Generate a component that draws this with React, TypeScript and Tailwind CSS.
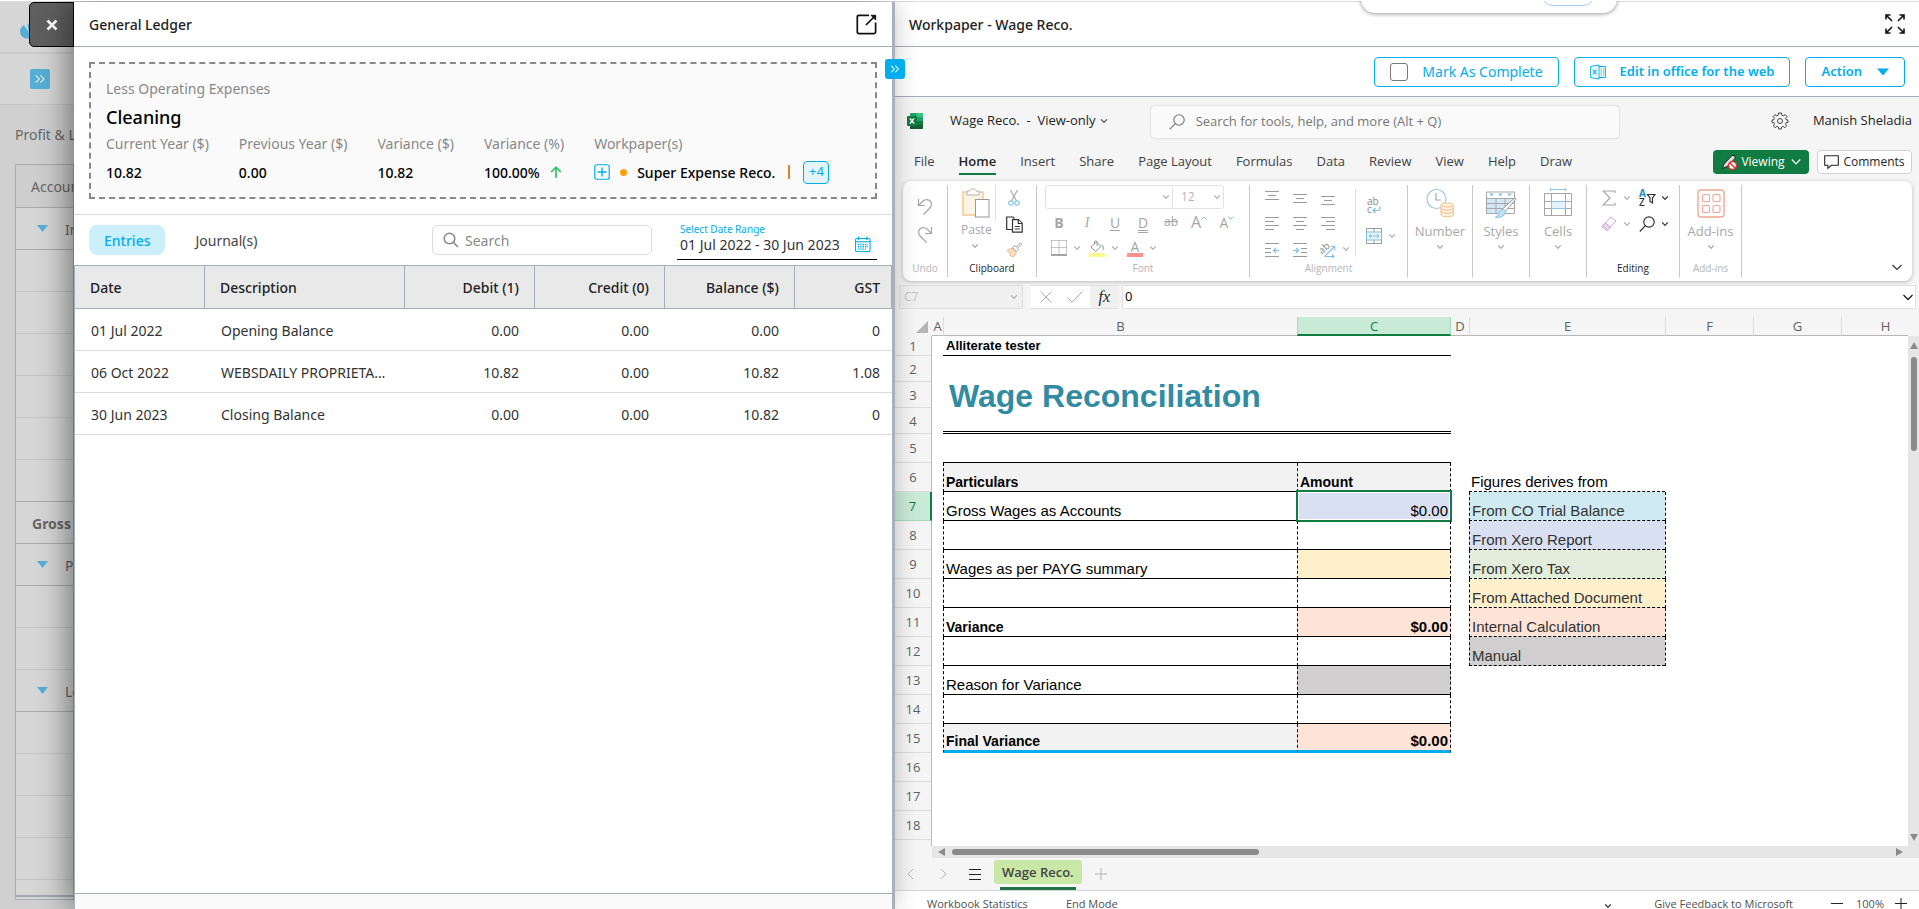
import type { ReactNode } from 'react';
import { ChevronsRight } from 'lucide-react';

type IconProps = { className?: string };

function Chevron({ className = 'text-[#b0b0b0]' }: IconProps) {
  return (
    <svg viewBox="0 0 8 8" className={`size-2 shrink-0 ${className}`} fill="none" stroke="currentColor" strokeWidth="1.3">
      <path d="M1.2 2.4 4 5.4 6.8 2.4" />
    </svg>
  );
}

/* ---------- Page behind the drawer ---------- */

const backdropRows = [
  { label: 'Income', caret: true, dark: true },
  {}, {}, {}, {}, {},
  { dark: true },
  { label: 'Gross Profit', bold: true, dark: true },
  { label: 'Plus Other Income', caret: true, dark: true },
  {}, {},
  { label: 'Less Operating Expenses', caret: true, dark: true },
  {}, {}, {}, {},
] as { label?: string; caret?: boolean; bold?: boolean; dark?: boolean }[];

function Backdrop() {
  return (
    <aside className="relative flex flex-col overflow-hidden whitespace-nowrap bg-[#d0d0d0] text-[#666]">
      <div className="flex h-[52px] shrink-0 items-center border-b-2 border-[#cacaca] bg-[#d6d6d6] pt-[8px] pl-5">
        <svg viewBox="0 0 24 20" className="h-5 w-6 shrink-0 text-[#55afd4]" fill="currentColor">
          <path d="M2 5.5C5 2.5 7 5 10 4.5V17C7 18.5 0 17 0 10.500C0 8.500 1 7 2 5.500Z" />
          <path d="M4 4.500 9 11 8 3Z" fill="#d6d6d6" />
          <path d="M7.500 3.500 12 0V12C10 11 8 9 7.500 3.500Z" />
        </svg>
      </div>
      <div className="flex h-[51px] shrink-0 items-center border-b border-[#c6c6c6] bg-[#d6d6d6] pl-[30px]">
        <button aria-label="Expand menu" className="flex size-5 items-center justify-center rounded-xs bg-[#55afd4] text-[#e4e4e4]">
          <ChevronsRight size={16} strokeWidth={1.75} />
        </button>
      </div>
      <div className="mt-5 shrink-0 pl-[15px] text-[14px] leading-[20px]">Profit &amp; Loss</div>
      <div className="mt-[19px] ml-[15px] border border-[#a9abaf] bg-[#d6d6d6] text-[14px]">
        <div className="flex h-[43px] items-center border-b border-[#a9abaf] bg-[#cecece] pl-[15px]">Account</div>
        {backdropRows.map((row, i) => (
          <div
            key={i}
            className={`flex h-[42px] items-center border-b pt-[2px] ${row.dark ? 'border-[#a9abaf]' : 'border-[#c4c4c4]'} ${
              row.caret ? 'pl-[21px]' : 'pl-4'
            } ${row.bold ? 'font-bold' : ''}`}
          >
            {row.caret && (
              <svg viewBox="0 0 11 7" className="mr-[17px] mb-[3px] h-[7px] w-[11px] shrink-0" fill="#55afd4">
                <path d="M0 0H11L5.500 7Z" />
              </svg>
            )}
            {row.label}
          </div>
        ))}
        <div className="h-[17px] border-b-2 border-[#a3a8b0]" />
        <div className="h-[2px]" />
      </div>
      <button
        aria-label="Close"
        className="absolute top-0 right-0 flex h-[45px] w-[45px] items-center justify-center rounded-l-[5px] border border-black bg-[#5f5f5f] text-white"
      >
        <svg viewBox="0 0 12 12" className="size-3" fill="none" stroke="currentColor" strokeWidth="2.600">
          <path d="M1.500 1.500 10.500 10.500M10.500 1.500 1.500 10.500" />
        </svg>
      </button>
    </aside>
  );
}

/* ---------- General ledger drawer ---------- */

const entries = [
  ['01 Jul 2022', 'Opening Balance', '0.00', '0.00', '0.00', '0'],
  ['06 Oct 2022', 'WEBSDAILY PROPRIETARY LIMITED', '10.82', '0.00', '10.82', '1.08'],
  ['30 Jun 2023', 'Closing Balance', '0.00', '0.00', '10.82', '0'],
];

const entryColumns = ['Date', 'Description', 'Debit (1)', 'Credit (0)', 'Balance ($)', 'GST'];

function Stat({ label, children }: { label: string; children: ReactNode }) {
  return (
    <div>
      <div className="leading-5 text-[#888]">{label}</div>
      <div className="mt-1 flex h-7 items-center font-medium text-black">{children}</div>
    </div>
  );
}

function PlusBox() {
  return (
    <svg viewBox="0 0 16 16" className="size-4" fill="none" stroke="#00aeef">
      <rect x=".75" y=".75" width="14.500" height="14.500" rx="2" strokeWidth="1.200" />
      <path d="M8 3.500V12.500M3.500 8H12.500" strokeWidth="1.400" />
    </svg>
  );
}

function CalendarIcon() {
  return (
    <svg viewBox="0 0 17 17" className="h-[17px] w-[17px]" fill="none" stroke="#00aeef">
      <rect x=".6" y="2" width="15.800" height="14.200" rx="1.500" strokeWidth="1.200" />
      <path d="M.6 5.500H16.400" strokeWidth="1.200" />
      <path d="M4 0V3.500M13 0V3.500" strokeWidth="1.600" />
      <path d="M3 8.500H14M3 11H14M3 13.500H12" strokeWidth="1.500" strokeDasharray="1.600 1" />
    </svg>
  );
}

function GeneralLedger() {
  return (
    <section className="relative z-10 flex min-w-0 flex-col bg-white shadow-[-6px_0_28px_rgba(0,0,0,0.45)]">
      <header className="flex h-[45px] shrink-0 items-center justify-between border-b border-[#a7adb6] pr-[15px] pl-[15px]">
        <h2 className="text-[14px] font-medium text-[#222]">General Ledger</h2>
        <button aria-label="Open in new window">
          <svg viewBox="0 0 21 21" className="h-[21px] w-[21px]" fill="none" stroke="#111" strokeWidth="1.700">
            <path d="M13 1.300H3Q1.300 1.300 1.300 3V18Q1.300 19.600 3 19.600H18Q19.600 19.600 19.600 18V8.500" />
            <path d="M10 11 19 2" />
            <path d="M15 1.300H19.700V6Z" fill="#111" strokeWidth="1" />
          </svg>
        </button>
      </header>

      <div className="shrink-0 border-b border-[#dcdcdc] p-[15px]">
        <div className="h-[137px] border-2 border-dashed border-[#888] bg-[#fafafa] px-[15px] pt-[15px] text-[14px]">
          <div className="leading-5 text-[#888]">Less Operating Expenses</div>
          <div className="mt-[6px] text-[18px] leading-6 font-medium text-black">Cleaning</div>
          <div className="mt-[5px] flex gap-[30px] whitespace-nowrap">
            <Stat label="Current Year ($)">10.82</Stat>
            <Stat label="Previous Year ($)">0.00</Stat>
            <Stat label="Variance ($)">10.82</Stat>
            <Stat label="Variance (%)">
              100.00%
              <svg viewBox="0 0 12 12" className="ml-[10px] size-3" fill="none" stroke="#2dc36a" strokeWidth="1.700">
                <path d="M6 12V1.200M1.200 6 6 1.200 10.800 6" />
              </svg>
            </Stat>
            <Stat label="Workpaper(s)">
              <button aria-label="Add workpaper">
                <PlusBox />
              </button>
              <span className="mr-[10px] ml-[10px] size-[7px] rounded-full bg-[#ff9f0a]" />
              Super Expense Reco.
              <span className="mx-[13px] h-[14px] w-[2px] bg-[#cf8a2c]" />
              <button className="h-[23px] w-[26px] rounded-[4px] border border-[#00aeef] bg-[#e3f4fb] text-[13px] font-normal text-[#00aeef]">
                +4
              </button>
            </Stat>
          </div>
        </div>
      </div>

      <div className="flex h-[50px] shrink-0 items-center px-[15px] text-[14px]">
        <button className="h-[30px] rounded-[8px] bg-[#cceffc] px-[15px] font-medium text-[#00aeef]">Entries</button>
        <button className="ml-[15px] h-[30px] px-[15px] text-[#444]">Journal(s)</button>
        <label className="ml-auto flex h-[30px] w-[220px] items-center rounded-[5px] border border-[#dcdcdc] pl-[10px]">
          <svg viewBox="0 0 16 16" className="size-4 shrink-0" fill="none" stroke="#888" strokeWidth="1.500">
            <circle cx="6.500" cy="6.500" r="5.300" />
            <path d="M10.400 10.400 15 15" />
          </svg>
          <input
            aria-label="Search"
            placeholder="Search"
            className="ml-[6px] w-full min-w-0 bg-transparent outline-none placeholder:text-[#888]"
          />
        </label>
        <label className="mt-[2px] ml-[25px] block w-[200px] border-b border-black pl-[3px]">
          <span className="block text-[10px] leading-[12px] text-[#00aeef]">Select Date Range</span>
          <span className="flex h-6 items-center pr-[6px] pb-1">
            <input defaultValue="01 Jul 2022 - 30 Jun 2023" className="h-5 w-full min-w-0 text-[#333] outline-none" />
            <CalendarIcon />
          </span>
        </label>
      </div>

      <div className="flex-1 border-t border-l border-[#a7adb6]">
        <table className="w-full table-fixed border-separate border-spacing-0 text-[14px]">
          <colgroup>
            <col className="w-[130px]" />
            <col className="w-[200px]" />
            <col className="w-[130px]" />
            <col className="w-[130px]" />
            <col className="w-[130px]" />
            <col />
          </colgroup>
          <thead>
            <tr className="h-[43px] bg-[#e9e9e9] text-[#222]">
              {entryColumns.map((name, i) => (
                <th
                  key={name}
                  className={`border-r border-b border-[#a7adb6] font-medium ${
                    i < 2 ? 'pl-[15px] text-left' : i === 5 ? 'pr-[11px] text-right' : 'pr-[15px] text-right'
                  }`}
                >
                  {name}
                </th>
              ))}
            </tr>
          </thead>
          <tbody>
            {entries.map((row) => (
              <tr key={row[0]} className="h-[42px] text-[#333]">
                {row.map((cell, i) => (
                  <td
                    key={i}
                    className={`truncate border-b border-[#dcdcdc] pt-[2px] ${
                      i < 2 ? 'pr-[14px] pl-4' : i === 5 ? 'pr-3 text-right' : 'pr-4 text-right'
                    }`}
                  >
                    {cell}
                  </td>
                ))}
              </tr>
            ))}
          </tbody>
        </table>
      </div>
      <footer className="h-4 shrink-0 border-t border-l border-[#a7adb6] bg-[#fafafa]" />
    </section>
  );
}

/* ---------- Ribbon ---------- */

type GroupProps = { label?: string; active?: boolean; width: string; children: ReactNode };

function Group({ label, active, width, children }: GroupProps) {
  return (
    <div className={`flex shrink-0 flex-col border-r border-[#c8c8c8] ${width}`}>
      <div className="h-[75px]">{children}</div>
      <div className={`h-4 text-center text-[10px] leading-4 ${active ? 'text-[#242424]' : 'text-[#b5b5b5]'}`}>{label}</div>
    </div>
  );
}

function BigButton({ label, icon }: { label: string; icon: ReactNode }) {
  return (
    <button className="flex w-full flex-col items-center pt-[3px] text-[13px] text-[#a8a8a8]">
      {icon}
      <span className="mt-1 leading-[18px]">{label}</span>
      <Chevron className="mt-[3px] text-[#a8a8a8]" />
    </button>
  );
}

function ToolButton({ label, children }: { label: string; children: ReactNode }) {
  return (
    <button aria-label={label} className="flex h-[26px] w-7 items-center justify-center text-[#a6a6a6]">
      {children}
    </button>
  );
}

function Lines({ d }: { d: string }) {
  return (
    <svg viewBox="0 0 14 14" className="size-[14px]" stroke="#9a9a9a" fill="none">
      <path d={d} />
    </svg>
  );
}

function Indent({ out }: { out?: boolean }) {
  return (
    <svg viewBox="0 0 14 14" className="size-[14px]" fill="none" stroke="#9a9a9a">
      <path d={out ? 'M0 .5H14M0 5.500H6M0 9.500H6M0 13.500H14' : 'M0 .5H14M8 5.500H14M8 9.500H14M0 13.500H14'} />
      <path d={out ? 'M14 7.500H9M11 5 8.500 7.500 11 10' : 'M0 7.500H5M3 5 5.500 7.500 3 10'} stroke="#7fc0e4" strokeWidth="1.200" />
    </svg>
  );
}

function UndoIcon({ flip }: { flip?: boolean }) {
  return (
    <svg viewBox="0 0 16 18" className={`h-[18px] w-4 ${flip ? '-scale-x-100' : ''}`} fill="none" stroke="#a6a6a6" strokeWidth="1.200">
      <path d="M1.500 1V7.500H8M1.500 7.500 6 3C9 .5 14 1.500 14.500 6C14.500 8 13.500 9.500 12 11L6.500 16.500" />
    </svg>
  );
}

function PasteIcon() {
  return (
    <svg viewBox="0 0 30 32" className="h-8 w-[30px]" fill="none">
      <rect x="2" y="5" width="20" height="23" fill="#fdf3e3" stroke="#f2cb94" strokeWidth="1.500" />
      <path d="M6 8V4H9C9.500 1 14.500 1 15 4H18V8Z" fill="#fff" stroke="#b3b3b3" />
      <rect x="14.500" y="12.500" width="13.500" height="17.500" fill="#fff" stroke="#999" />
    </svg>
  );
}

function CutIcon() {
  return (
    <svg viewBox="0 0 16 16" className="size-4" fill="none">
      <path d="M4.500 0 10.500 11M11.500 0 5.500 11" stroke="#a6a6a6" strokeWidth="1.100" />
      <circle cx="5" cy="13" r="2.200" stroke="#8cc6e6" strokeWidth="1.200" />
      <circle cx="11" cy="13" r="2.200" stroke="#8cc6e6" strokeWidth="1.200" />
    </svg>
  );
}

function CopyIcon() {
  return (
    <svg viewBox="0 0 17 17" className="h-[17px] w-[17px]" fill="#fff" stroke="#333" strokeWidth="1.200">
      <path d="M6.500 13.500H.7V1H7L8.500 2.500" />
      <path d="M6.500 3.600H12.500L16.200 7.300V16.200H6.500Z" />
      <path d="M12.300 3.800V7.500H16M8.800 10.500H13.800M8.800 13H13.800" />
    </svg>
  );
}

function PainterIcon() {
  return (
    <svg viewBox="0 0 16 16" className="size-4" fill="none">
      <path d="M.8 8.500 6 6 10.500 11.500 7 15 3.500 13 4.500 11Z" fill="#fae0c4" stroke="#edb680" />
      <path d="M6.500 5.500 8.500 3.500 12.500 7.500 10.500 9.800Z" fill="#fff" stroke="#a6a6a6" />
      <path d="M10 5 14.500.8 15.500 2 11.500 6.500" fill="#fff" stroke="#a6a6a6" />
    </svg>
  );
}

function BordersIcon() {
  return (
    <svg viewBox="0 0 16 16" className="size-4" fill="none" stroke="#8e8e8e">
      <path d="M.5.5H15.500M.5.5V14M15.500.5V14M8 .5V14M.5 7.500H15.500" strokeDasharray="1 1" />
      <path d="M0 15H16" strokeWidth="1.600" />
    </svg>
  );
}

function FillIcon() {
  return (
    <svg viewBox="0 0 16 17" className="h-[17px] w-4" fill="none">
      <path d="M2 7 7.500 2 12 6.500 6.500 11.500ZM5.500 4V1.500Q7 0 8 1.500V6" stroke="#999" />
      <path d="M12.500 5Q15 6 14 10" stroke="#7fc0e4" strokeWidth="1.300" />
      <rect y="13" width="16" height="4" fill="#fdfb8c" />
    </svg>
  );
}

function WrapIcon() {
  return (
    <svg viewBox="0 0 16 18" className="h-[18px] w-4" fill="none">
      <text x="1" y="8" fontSize="10" fill="#888">ab</text>
      <text x="1" y="16" fontSize="10" fill="#888">c</text>
      <path d="M14 9.500V12Q14 13.500 12 13.500H7M9.500 11 7 13.500 9.500 16" stroke="#7fc0e4" strokeWidth="1.200" />
    </svg>
  );
}

function MergeIcon() {
  return (
    <svg viewBox="0 0 16 16" className="size-4" fill="none" stroke="#999">
      <path d="M.5.5H15.500V15.500H.5ZM8 .5V4M8 12V15.500" />
      <rect x=".5" y="4" width="15" height="8" fill="#eaf5fb" stroke="#7fc0e4" />
      <path d="M3 8H13M5 6 3 8 5 10M11 6 13 8 11 10" stroke="#7fc0e4" />
    </svg>
  );
}

function OrientationIcon() {
  return (
    <svg viewBox="0 0 16 16" className="size-4" fill="none">
      <text x="-1" y="9" fontSize="10" fill="#888" transform="rotate(-40 5 7)">ab</text>
      <path d="M4.500 14.500 14.500 4.500M10.500 4.300H14.700V8.500M5 14.500H14M12 12.500 14 14.500 12 16" stroke="#7fc0e4" strokeWidth="1.100" />
    </svg>
  );
}

function NumberIcon() {
  return (
    <svg viewBox="0 0 28 30" className="h-[30px] w-7" fill="none">
      <circle cx="10.500" cy="11" r="9.500" stroke="#9ccbe8" strokeWidth="1.200" />
      <path d="M10 5V12H15" stroke="#a6a6a6" strokeWidth="1.200" />
      <path d="M15 17V26.500C15 29.500 27.300 29.500 27.300 26.500V17" fill="#fdf3e3" stroke="#f2bf85" />
      <ellipse cx="21.150" cy="17" rx="6.150" ry="2" fill="#fdf3e3" stroke="#f2bf85" />
      <path d="M15 20.200C15 22.800 27.300 22.800 27.300 20.200M15 23.400C15 26 27.300 26 27.300 23.400" stroke="#f2bf85" />
    </svg>
  );
}

function StylesIcon() {
  return (
    <svg viewBox="0 0 32 30" className="h-[30px] w-8" fill="none">
      <path d="M1.500 10.500H29.500V15.500H20V25.500H1.500Z" fill="#d3e8f6" />
      <path d="M1.500 4H29.500V25.500H1.500ZM1.500 10.500H29.500M1.500 15.500H29.500M1.500 20.500H29.500M11 10.500V25.500M20 10.500V25.500" stroke="#a6a6a6" />
      <path d="M4 5.500H9L6.500 8.500ZM13 5.500H18L15.500 8.500ZM22 5.500H27L24.500 8.500Z" fill="#8cc6e6" />
      <path d="M31 11 20 24 17 21.500 28 11.500Q31 9 31 11Z" fill="#fff" stroke="#999" />
      <path d="M16 22Q20.500 21 20.500 24.500Q19 30 10 29.500Q13.500 28 13.500 25.500Q14 22.500 16 22Z" fill="#bfe0f4" stroke="#8cc6e6" />
    </svg>
  );
}

function CellsIcon() {
  return (
    <svg viewBox="0 0 30 30" className="size-[30px]" fill="none">
      <path d="M7.500 1.500H22.500M7.500 0V3M22.500 0V3" stroke="#8cc6e6" />
      <path d="M1.500 5.500H28.500V27.500H1.500ZM1.500 13.500H28.500M1.500 20.500H28.500M8.500 5.500V27.500M22.500 5.500V27.500" stroke="#a6a6a6" />
      <rect x="8.500" y="13.500" width="14" height="7" fill="#e7f3fb" stroke="#8cc6e6" />
    </svg>
  );
}

function AddinsIcon() {
  return (
    <svg viewBox="0 0 30 30" className="size-[30px]" fill="none" stroke="#f0a793" strokeWidth="1.100">
      <rect x="2" y="2" width="26" height="27" rx="3" strokeWidth="1.400" />
      <rect x="6.500" y="6.500" width="7" height="7" rx="1" />
      <rect x="17" y="6.500" width="7" height="7" rx="1" />
      <rect x="6.500" y="17.500" width="7" height="7" rx="1" />
      <rect x="17" y="17.500" width="7" height="7" rx="1" />
    </svg>
  );
}

function Ribbon() {
  return (
    <div className="mr-[7px] ml-2 flex h-[100px] shrink-0 rounded-[8px] bg-white py-1 shadow-[0_1px_4px_rgba(0,0,0,0.25)]">
      <Group label="Undo" width="w-[45px]">
        <div className="flex flex-col items-center gap-[10px] pt-[13px]">
          <button aria-label="Undo" className="block h-[18px]"><UndoIcon /></button>
          <button aria-label="Redo" className="block h-[18px]"><UndoIcon flip /></button>
        </div>
      </Group>

      <Group label="Clipboard" active width="w-[89px]">
        <div className="flex">
          <button className="ml-[13px] flex w-[35px] flex-col items-center text-[12px] text-[#a8a8a8]">
            <span className="flex h-[36px] w-full items-center border-r border-[#e0e0e0]"><PasteIcon /></span>
            <span className="w-[30px] self-start leading-[18px]">Paste</span>
            <Chevron className="mt-[3px] mr-[7px] text-[#a8a8a8]" />
          </button>
          <div className="ml-[4px] flex flex-col">
            <ToolButton label="Cut"><CutIcon /></ToolButton>
            <ToolButton label="Copy"><CopyIcon /></ToolButton>
            <ToolButton label="Format painter"><PainterIcon /></ToolButton>
          </div>
        </div>
      </Group>

      <Group label="Font" width="w-[213px]">
        <div className="pl-2">
          <div className="flex h-6 w-[179px] rounded-[3px] border border-[#e2e2e2] text-[12px] text-[#b5b5b5]">
            <button aria-label="Font name" className="flex flex-1 items-center justify-end pr-[2px]"><Chevron /></button>
            <button aria-label="Font size" className="flex w-[51px] items-center justify-between border-l border-[#e2e2e2] pr-[2px] pl-2">
              12
              <Chevron />
            </button>
          </div>
          <div className="flex text-[14px]">
            <ToolButton label="Bold"><b>B</b></ToolButton>
            <ToolButton label="Italic"><i className="font-['Liberation_Serif',serif]">I</i></ToolButton>
            <ToolButton label="Underline"><span className="underline underline-offset-2">U</span></ToolButton>
            <ToolButton label="Double underline"><span className="underline decoration-double underline-offset-2">D</span></ToolButton>
            <ToolButton label="Strikethrough"><span className="text-[12px] line-through">ab</span></ToolButton>
            <ToolButton label="Grow font">
              <span className="text-[16px]">A</span>
              <svg viewBox="0 0 6 4" className="mb-2 h-1 w-[6px]" fill="none" stroke="#7fc0e4"><path d="M.5 3.500 3 1 5.500 3.500" /></svg>
            </ToolButton>
            <ToolButton label="Shrink font">
              <span>A</span>
              <svg viewBox="0 0 6 4" className="mb-2 h-1 w-[6px]" fill="none" stroke="#7fc0e4"><path d="M.5.5 3 3 5.500.5" /></svg>
            </ToolButton>
          </div>
          <div className="flex items-center">
            <ToolButton label="Borders"><BordersIcon /></ToolButton>
            <Chevron />
            <span className="w-[2px]" />
            <ToolButton label="Fill colour"><FillIcon /></ToolButton>
            <Chevron />
            <span className="w-[2px]" />
            <ToolButton label="Font colour">
              <span className="flex w-4 flex-col items-center">
                <span className="text-[14px] leading-[13px]">A</span>
                <span className="h-1 w-full bg-[#ff8f8f]" />
              </span>
            </ToolButton>
            <Chevron />
          </div>
        </div>
      </Group>

      <Group label="Alignment" width="w-[158px]">
        <div className="flex pl-2">
          <div className="grid grid-cols-[28px_28px_28px]">
            <ToolButton label="Top align"><Lines d="M0 .5H14M3 4.500H11M0 8.500H14" /></ToolButton>
            <ToolButton label="Middle align"><Lines d="M0 3.500H14M3 7.500H11M0 11.500H14" /></ToolButton>
            <ToolButton label="Bottom align"><Lines d="M0 5.500H14M3 9.500H11M0 13.500H14" /></ToolButton>
            <ToolButton label="Align left"><Lines d="M0 .5H14M0 4.500H9M0 8.500H14M0 12.500H9" /></ToolButton>
            <ToolButton label="Center"><Lines d="M0 .5H14M3 4.500H11M0 8.500H14M3 12.500H11" /></ToolButton>
            <ToolButton label="Align right"><Lines d="M0 .5H14M5 4.500H14M0 8.500H14M5 12.500H14" /></ToolButton>
            <ToolButton label="Decrease indent"><Indent out /></ToolButton>
            <ToolButton label="Increase indent"><Indent /></ToolButton>
            <ToolButton label="Orientation"><OrientationIcon /></ToolButton>
          </div>
          <div className="mt-1 flex h-[68px] w-[14px] items-end border-r border-[#e0e0e0] pb-1"><Chevron /></div>
          <div className="flex flex-col gap-1 pt-[8px] pl-1">
            <ToolButton label="Wrap text"><WrapIcon /></ToolButton>
            <div className="flex items-center">
              <ToolButton label="Merge cells"><MergeIcon /></ToolButton>
              <Chevron />
            </div>
          </div>
        </div>
      </Group>

      <Group width="w-[65px]"><BigButton label="Number" icon={<NumberIcon />} /></Group>
      <Group width="w-[57px]"><BigButton label="Styles" icon={<StylesIcon />} /></Group>
      <Group width="w-[57px]"><BigButton label="Cells" icon={<CellsIcon />} /></Group>

      <Group label="Editing" active width="w-[93px]">
        <div className="grid grid-cols-[28px_10px_28px_10px] items-center pl-2">
          <ToolButton label="AutoSum">
            <svg viewBox="0 0 14 16" className="h-4 w-[14px]" fill="none" stroke="#a6a6a6" strokeWidth="1.200"><path d="M13 3V1H1L8 8 1 15H13V13" /></svg>
          </ToolButton>
          <Chevron />
          <ToolButton label="Sort and filter">
            <svg viewBox="0 0 18 18" className="size-[18px]" fill="none">
              <text x="1" y="8" fontSize="10" fontWeight="700" fill="#1e88c9">A</text>
              <text x="1" y="17" fontSize="10" fontWeight="600" fill="#333">Z</text>
              <path d="M9.500 5.500H17L14.500 9V14L12 12.500V9Z" stroke="#333" strokeWidth="1.200" />
            </svg>
          </ToolButton>
          <Chevron className="text-[#333]" />
          <ToolButton label="Clear">
            <svg viewBox="0 0 16 16" className="size-4" fill="none" stroke="#d0a3d4">
              <path d="M1 10.500 10 1 15 5 6 14.500Z" />
              <path d="M1 10.500 4.500 7 9.500 11 6 14.500Z" fill="#ecd3ee" />
            </svg>
          </ToolButton>
          <Chevron />
          <ToolButton label="Find">
            <svg viewBox="0 0 16 16" className="size-4" fill="none" stroke="#333" strokeWidth="1.200"><circle cx="10" cy="6" r="5.200" /><path d="M6.500 9.700.8 15.500" /></svg>
          </ToolButton>
          <Chevron className="text-[#333]" />
        </div>
      </Group>

      <Group label="Add-ins" width="w-[62px]"><BigButton label="Add-ins" icon={<AddinsIcon />} /></Group>

      <div className="flex flex-1 items-end justify-end pr-[9px] pb-1">
        <button aria-label="Collapse ribbon">
          <svg viewBox="0 0 12 12" className="size-3" fill="none" stroke="#333" strokeWidth="1.200"><path d="M1.500 4 6 8.500 10.500 4" /></svg>
        </button>
      </div>
    </div>
  );
}

/* ---------- Spreadsheet ---------- */

type SheetRow = { b?: string; c?: string; bold?: boolean; bFill?: string; cFill?: string; e?: string; eFill?: string };

const sheetRows: SheetRow[] = [
  { b: 'Particulars', c: 'Amount', bold: true, bFill: 'bg-[#f2f2f2]', cFill: 'bg-[#f2f2f2]', e: 'Figures derives from' },
  { b: 'Gross Wages as Accounts', c: '$0.00', cFill: 'bg-[#d9e0f2]', e: 'From CO Trial Balance', eFill: 'bg-[#d0eaf1]' },
  { e: 'From Xero Report', eFill: 'bg-[#d9e0f2]' },
  { b: 'Wages as per PAYG summary', cFill: 'bg-[#fff0cc]', e: 'From Xero Tax', eFill: 'bg-[#e2eedb]' },
  { e: 'From Attached Document', eFill: 'bg-[#fff0cc]' },
  { b: 'Variance', c: '$0.00', bold: true, cFill: 'bg-[#fde4d6]', e: 'Internal Calculation', eFill: 'bg-[#fde4d6]' },
  { e: 'Manual', eFill: 'bg-[#d0cece]' },
  { b: 'Reason for Variance', cFill: 'bg-[#d0cece]' },
  {},
  { b: 'Final Variance', c: '$0.00', bold: true, bFill: 'bg-[#f2f2f2]', cFill: 'bg-[#fde4d6]' },
];

const emptyRows = [16, 17, 18];

function RowNumber({ n, selected }: { n: number; selected?: boolean }) {
  return (
    <th
      scope="row"
      className={`border-b p-0 text-center font-normal ${
        selected
          ? 'border-r-2 border-r-[#107c41] border-b-[#a5d9bb] bg-[#caead8] text-[#107c41]'
          : 'border-r border-r-[#b8b8b8] border-b-[#dcdcdc] bg-[#f5f5f5] text-[#616161]'
      }`}
    >
      {n}
    </th>
  );
}

function Sheet() {
  return (
    <div className="min-w-0 flex-1 overflow-hidden bg-white">
      <table className="w-[1034px] table-fixed border-separate border-spacing-0 font-['Open_Sans',sans-serif] text-[13px] whitespace-nowrap">
        <colgroup>
          <col className="w-[37px]" />
          <col className="w-[11px]" />
          <col className="w-[354px]" />
          <col className="w-[154px]" />
          <col className="w-[18px]" />
          <col className="w-[196px]" />
          <col className="w-[88px]" />
          <col className="w-[88px]" />
          <col className="w-[88px]" />
        </colgroup>
        <thead>
          <tr className="h-[19px] bg-[#f5f5f5] text-[#616161]">
            <th aria-label="Select all" className="p-0">
              <svg viewBox="0 0 12 12" className="ml-[21px] size-3" fill="#b5b5b5"><path d="M12 0V12H0Z" /></svg>
            </th>
            {['A', 'B', 'C', 'D', 'E', 'F', 'G', 'H'].map((name) => (
              <th
                key={name}
                scope="col"
                className={`p-0 text-center leading-[16px] font-normal ${
                  name === 'C'
                    ? 'border-x border-b-2 border-x-[#a5d9bb] border-b-[#107c41] bg-[#caead8] text-[#107c41]'
                    : name === 'A' || name === 'D'
                      ? 'border-b border-[#b8b8b8]'
                      : 'border-b border-l border-b-[#b8b8b8] border-l-[#dcdcdc]'
                }`}
              >
                {name}
              </th>
            ))}
          </tr>
        </thead>
        <tbody className="font-['Liberation_Sans',sans-serif] text-[15px] leading-[18px] text-black [&_th]:font-['Open_Sans',sans-serif] [&_th]:text-[13px]">
          <tr className="h-5">
            <RowNumber n={1} />
            <td />
            <td colSpan={2} className="border-b border-black p-0 pl-[3px] align-bottom text-[13px] font-bold">Alliterate tester</td>
            <td colSpan={5} />
          </tr>
          <tr className="h-[26px]">
            <RowNumber n={2} />
            <td />
            <td colSpan={2} rowSpan={3} className="border-b-3 border-double border-black p-0 pt-1 pl-[6px] text-[32px] leading-10 font-bold text-[#318ba2]">
              Wage Reconciliation
            </td>
            <td colSpan={5} />
          </tr>
          <tr className="h-[26px]"><RowNumber n={3} /><td /><td colSpan={5} /></tr>
          <tr className="h-[26px]"><RowNumber n={4} /><td /><td colSpan={5} /></tr>
          <tr className="h-[29px]">
            <RowNumber n={5} />
            <td />
            <td colSpan={2} className="border-b border-black" />
            <td colSpan={5} />
          </tr>
          {sheetRows.map((row, i) => {
            const selected = i === 1;
            const bottom = i === 9 ? 'border-b-3 border-b-[#00aeef]' : 'border-b border-b-black';
            const numeric = i > 0;
            return (
              <tr key={i} className="h-[29px]">
                <RowNumber n={i + 6} selected={selected} />
                <td />
                <td
                  className={`border-l border-l-black p-0 pl-[2px] align-bottom [border-left-style:dashed] ${bottom} ${row.bFill ?? ''} ${
                    row.bold ? 'text-[14px] font-bold' : ''
                  }`}
                >
                  {row.b}
                </td>
                <td
                  className={`relative border-x border-x-black p-0 align-bottom [border-left-style:dashed] [border-right-style:dashed] ${bottom} ${
                    row.cFill ?? ''
                  } ${numeric ? 'pr-[2px] text-right' : 'pl-[2px] text-[14px]'} ${row.bold ? 'font-bold' : ''}`}
                >
                  {row.c}
                  {selected && (
                    <span className="absolute -inset-[2px] border-2 border-[#107c41] inset-ring inset-ring-white" />
                  )}
                </td>
                <td />
                <td
                  className={`p-0 pl-[2px] align-bottom ${i < 7 ? 'border-b border-dashed border-black' : ''} ${
                    row.eFill ? `border-l text-[#333] ${row.eFill}` : ''
                  }`}
                >
                  {row.e}
                </td>
                <td className={row.eFill ? 'border-l border-dashed border-black' : ''} />
                <td colSpan={2} />
              </tr>
            );
          })}
          {emptyRows.map((n) => (
            <tr key={n} className="h-[29px]">
              <RowNumber n={n} />
              <td colSpan={8} />
            </tr>
          ))}
          <tr className="h-[29px]">
            <th className="border-r border-[#b8b8b8] bg-[#f5f5f5]" />
            <td colSpan={8} />
          </tr>
        </tbody>
      </table>
    </div>
  );
}

/* ---------- Workpaper panel ---------- */

const ribbonTabs = ['File', 'Home', 'Insert', 'Share', 'Page Layout', 'Formulas', 'Data', 'Review', 'View', 'Help', 'Draw'];

function ExcelLogo() {
  return (
    <svg viewBox="0 0 16 16" className="size-4 shrink-0">
      <rect x="3" width="13" height="16" rx="1" fill="#21a366" />
      <path d="M9.500 0H15Q16 0 16 1V4H9.500Z" fill="#33c481" />
      <path d="M3 8H9.500V12H3ZM9.500 8H16V12H9.500Z" fill="#107c41" />
      <path d="M3 12H16V15Q16 16 15 16H4Q3 16 3 15Z" fill="#185c37" />
      <rect y="3" width="10" height="10" rx="1" fill="#107c41" />
      <path d="M3 5.500 7 10.500M7 5.500 3 10.500" stroke="#fff" strokeWidth="1.400" />
    </svg>
  );
}

function ExcelArea() {
  return (
    <div className="flex min-h-0 flex-1 flex-col bg-[#f5f5f5] font-['Open_Sans',sans-serif] text-[#242424]">
      <div className="flex h-12 shrink-0 items-center pr-[7px] pl-3 text-[13px]">
        <ExcelLogo />
        <button className="ml-[27px] flex items-center whitespace-pre">
          Wage Reco.  -  View-only
          <Chevron className="ml-1 text-[#555]" />
        </button>
        <label className="mt-[1px] ml-[43px] flex h-8 w-[468px] items-center rounded-[4px] bg-[#fafafa] pl-[18px] shadow-[0_0_2px_rgba(0,0,0,0.25)]">
          <svg viewBox="0 0 16 16" className="size-4 shrink-0" fill="none" stroke="#777" strokeWidth="1.100">
            <circle cx="10" cy="6" r="5.200" />
            <path d="M6.300 9.700.6 15.400" />
          </svg>
          <input
            aria-label="Search for tools, help, and more"
            placeholder="Search for tools, help, and more (Alt + Q)"
            className="ml-[11px] w-full min-w-0 bg-transparent outline-none placeholder:text-[#777]"
          />
        </label>
        <button aria-label="Settings" className="ml-auto">
          <svg viewBox="0 0 18 18" className="size-[18px]" fill="none" stroke="#444">
            <circle cx="9" cy="9" r="2.500" />
            <path d="M7.600 1H10.400L10.800 3.200 12.400 3.900 14.300 2.600 16 4.500 14.600 6.200 15.100 7.700 17 8V10.400L15.100 10.700 14.500 12.200 15.700 13.900 13.900 15.600 12.200 14.400 10.700 15 10.300 17H7.700L7.300 15 5.800 14.400 4.100 15.600 2.300 13.900 3.500 12.200 2.900 10.700 1 10.400V8L2.900 7.700 3.500 6.200 2.200 4.500 3.900 2.600 5.700 3.900 7.200 3.200Z" />
          </svg>
        </button>
        <span className="ml-6">Manish Sheladia</span>
      </div>

      <div className="flex h-9 shrink-0 items-center pr-[7px] pb-[2px] pl-[7px] text-[13px]">
        <nav className="flex text-[#424242]">
          {ribbonTabs.map((tab) => (
            <button key={tab} className="px-3">
              <span
                className={`block border-b-2 leading-[24px] ${
                  tab === 'Home' ? 'border-[#107c41] font-semibold text-[#242424]' : 'border-transparent'
                }`}
              >
                {tab}
              </span>
            </button>
          ))}
        </nav>
        <button className="ml-auto flex h-6 w-24 items-center justify-center gap-1 rounded-[4px] bg-[#107c41] text-[12px] font-medium text-white">
          <svg viewBox="0 0 16 16" className="size-4" fill="none">
            <path d="M1.500 14.500 3 10 10.500 2Q12 .5 13.500 2Q15 3.500 13.500 5L6 12.500Z" fill="#ddd" stroke="#222" />
            <circle cx="11.500" cy="11.500" r="4" fill="#fff" stroke="#d92c2c" strokeWidth="1.400" />
            <path d="M8.800 8.800 14.200 14.200" stroke="#d92c2c" strokeWidth="1.400" />
          </svg>
          Viewing
          <svg viewBox="0 0 10 10" className="ml-[2px] size-[10px]" fill="none" stroke="currentColor" strokeWidth="1.200"><path d="M.8 2.500 5 6.800 9.200 2.500" /></svg>
        </button>
        <button className="ml-2 flex h-6 w-[95px] items-center justify-center gap-1 rounded-[4px] border border-[#d1d1d1] bg-white text-[12px]">
          <svg viewBox="0 0 15 14" className="h-[14px] w-[15px]" fill="none" stroke="#242424" strokeWidth="1.100">
            <path d="M.7.700H14.300V10.300H7.500L3.800 13.300V10.300H.7Z" />
          </svg>
          Comments
        </button>
      </div>

      <Ribbon />

      <div className="mt-1 flex h-6 shrink-0 pr-[3px] pl-1 text-[13px]">
        <button className="flex w-[124px] items-center justify-between border border-[#e0e0e0] bg-[#f0f0f0] px-1 text-[12px] text-[#c4c4c4]">
          C7
          <Chevron />
        </button>
        <div className="ml-2 flex w-[88px] border-y border-[#e0e0e0] bg-white">
          <button aria-label="Cancel" className="flex flex-1 items-center justify-center">
            <svg viewBox="0 0 12 12" className="size-3" fill="none" stroke="#aaa"><path d="M.5.500 11.500 11.500M11.500.500.500 11.500" /></svg>
          </button>
          <button aria-label="Enter" className="flex flex-1 items-center justify-center">
            <svg viewBox="0 0 16 12" className="h-3 w-4" fill="none" stroke="#aaa"><path d="M.5 6.500 5 11 15.500.5" /></svg>
          </button>
          <button className="flex-1 bg-[#f0f0f0] font-['Liberation_Serif',serif] text-[16px] leading-5 italic">fx</button>
        </div>
        <div className="ml-[3px] flex flex-1 items-center border border-[#e0e0e0] bg-white pr-[1px] pl-[2px]">
          <input aria-label="Formula" defaultValue="0" className="w-full text-black outline-none" />
          <svg viewBox="0 0 12 12" className="size-3 shrink-0" fill="none" stroke="#222" strokeWidth="1.400"><path d="M1.500 4 6 8.500 10.500 4" /></svg>
        </div>
      </div>

      <div className="mt-2 flex min-h-0 flex-1">
        <Sheet />
        <div className="mt-[19px] flex w-[11px] flex-col items-center justify-between bg-[#e6e6e6] pt-[6px]">
          <div className="flex flex-col items-center gap-2">
            <svg viewBox="0 0 8 7" className="h-[7px] w-2" fill="#8a8a8a"><path d="M4 0 8 7H0Z" /></svg>
            <span className="h-[94px] w-[6px] rounded-full bg-[#8a8a8a]" />
          </div>
          <svg viewBox="0 0 8 7" className="mb-[5px] h-[7px] w-2" fill="#8a8a8a"><path d="M0 0H8L4 7Z" /></svg>
        </div>
      </div>
      <div className="ml-[37px] flex h-3 shrink-0 items-center bg-[#e6e6e6] pr-4 pl-[6px]">
        <svg viewBox="0 0 7 8" className="h-2 w-[7px]" fill="#8a8a8a"><path d="M7 0V8L0 4Z" /></svg>
        <span className="ml-[7px] h-[6px] w-[307px] rounded-full bg-[#8a8a8a]" />
        <svg viewBox="0 0 7 8" className="ml-auto h-2 w-[7px]" fill="#8a8a8a"><path d="M0 0 7 4 0 8Z" /></svg>
      </div>

      <div className="flex h-8 shrink-0 items-start pl-3 text-[13px]">
        <button aria-label="Previous sheet" className="mt-[10px]">
          <svg viewBox="0 0 7 12" className="h-3 w-[7px]" fill="none" stroke="#b5b5b5"><path d="M6 1 1 6 6 11" /></svg>
        </button>
        <button aria-label="Next sheet" className="mt-[10px] ml-[26px]">
          <svg viewBox="0 0 7 12" className="h-3 w-[7px]" fill="none" stroke="#b5b5b5"><path d="M1 1 6 6 1 11" /></svg>
        </button>
        <button aria-label="All sheets" className="mt-[10px] ml-[22px]">
          <svg viewBox="0 0 12 12" className="size-3" fill="none" stroke="#242424"><path d="M0 1.500H12M0 6.500H12M0 11.500H12" /></svg>
        </button>
        <button className="mt-[2px] ml-[13px]">
          <span className="block h-6 rounded-[3px] bg-[#c9e7a7] px-2 leading-6 font-semibold text-[#444]">Wage Reco.</span>
          <span className="mx-[6px] mt-[3px] block h-[3px] bg-[#217346]" />
        </button>
        <button aria-label="Add sheet" className="mt-[10px] ml-[13px]">
          <svg viewBox="0 0 12 12" className="size-3" fill="none" stroke="#b5b5b5"><path d="M6 0V12M0 6H12" /></svg>
        </button>
      </div>
      <div className="flex h-[19px] shrink-0 items-start overflow-hidden border-t border-[#d6d6d6] bg-white pt-[3px] pr-3 pl-8 text-[11px] leading-[20px] text-[#505050]">
        <span>Workbook Statistics</span>
        <span className="ml-[38px]">End Mode</span>
        <Chevron className="mt-2 ml-auto text-[#333]" />
        <span className="ml-[42px]">Give Feedback to Microsoft</span>
        <button aria-label="Zoom out" className="mt-1 ml-[38px]">
          <svg viewBox="0 0 12 12" className="size-3" stroke="#242424"><path d="M0 5.500H12" /></svg>
        </button>
        <span className="ml-[13px]">100%</span>
        <button aria-label="Zoom in" className="mt-1 ml-[11px]">
          <svg viewBox="0 0 12 12" className="size-3" stroke="#242424"><path d="M0 5.500H12M6 0V12" /></svg>
        </button>
      </div>
    </div>
  );
}

function Workpaper() {
  return (
    <section className="flex min-h-0 min-w-0 flex-col bg-white">
      <header className="flex h-[45px] shrink-0 items-center justify-between border-b border-[#a7adb6] pr-[14px] pl-[14px]">
        <h2 className="text-[14px] font-medium text-[#222]">Workpaper - Wage Reco.</h2>
        <button aria-label="Full screen">
          <svg viewBox="0 0 20 20" className="size-5" fill="none" stroke="#111" strokeWidth="1.600">
            <path d="M1 5.500V1H5.500M1 1 7 7M14.500 1H19V5.500M19 1 13 7M1 14.500V19H5.500M1 19 7 13M19 14.500V19H14.500M19 19 13 13" />
          </svg>
        </button>
      </header>
      <div className="flex h-[50px] shrink-0 items-center justify-end gap-[15px] border-b border-[#a7adb6] pr-[14px] text-[14px] text-[#00aeef]">
        <label className="flex h-[30px] items-center rounded-[4px] border border-[#00aeef] px-[15px]">
          <input type="checkbox" className="mr-[14px] size-[18px] appearance-none rounded-[3px] border border-[#777]" />
          Mark As Complete
        </label>
        <button className="flex h-[30px] items-center rounded-[4px] border border-[#00aeef] px-[15px] text-[13px] font-semibold">
          <svg viewBox="0 0 16 16" className="mr-[14px] size-4" fill="none" stroke="#00aeef">
            <path d="M.7 2.500 9 1V15L.7 13.500ZM9 2.500H15.400V13.500H9" />
            <path d="M2.800 5.500 6.500 10.500M6.500 5.500 2.800 10.500" strokeWidth="1.200" />
            <path d="M10.500 5H11.800M13 5H14.200M10.500 7H11.800M13 7H14.200M10.500 9H11.800M13 9H14.200M10.500 11H11.800M13 11H14.200" strokeWidth="1.200" />
          </svg>
          Edit in office for the web
        </button>
        <button className="flex h-[30px] items-center gap-[15px] rounded-[4px] border border-[#00aeef] px-[15px] text-[13px] font-semibold">
          Action
          <svg viewBox="0 0 12 8" className="h-2 w-3" fill="#00aeef"><path d="M0 .5H12L6 7.500Z" /></svg>
        </button>
      </div>
      <ExcelArea />
    </section>
  );
}

export default function App() {
  return (
    <main className="relative grid h-screen grid-cols-[74px_818fr_3px_1024fr] grid-rows-[minmax(0,1fr)] overflow-hidden border-t border-white bg-white pt-px font-['Noto_Sans',sans-serif]">
      <div className="absolute inset-x-0 top-0 h-px bg-[#dcdcdc]" />
      <Backdrop />
      <GeneralLedger />
      <div className="relative z-20 bg-[#a9b1bd]">
        <button
          aria-label="Expand workpaper"
          className="absolute top-[57px] -left-[7px] flex size-5 items-center justify-center rounded-[3px] bg-[#00aeef] text-white"
        >
          <ChevronsRight size={14} strokeWidth={1.75} />
        </button>
      </div>
      <Workpaper />
      <div className="absolute -top-4 right-[302px] z-30 flex h-7 w-64 items-end justify-end rounded-[14px] bg-white pr-[22px] pb-[7px] shadow-[0_1px_4px_rgba(0,0,0,0.4)]">
        <span className="h-6 w-[54px] rounded-full border border-[#a8c7fa]" />
      </div>
    </main>
  );
}
